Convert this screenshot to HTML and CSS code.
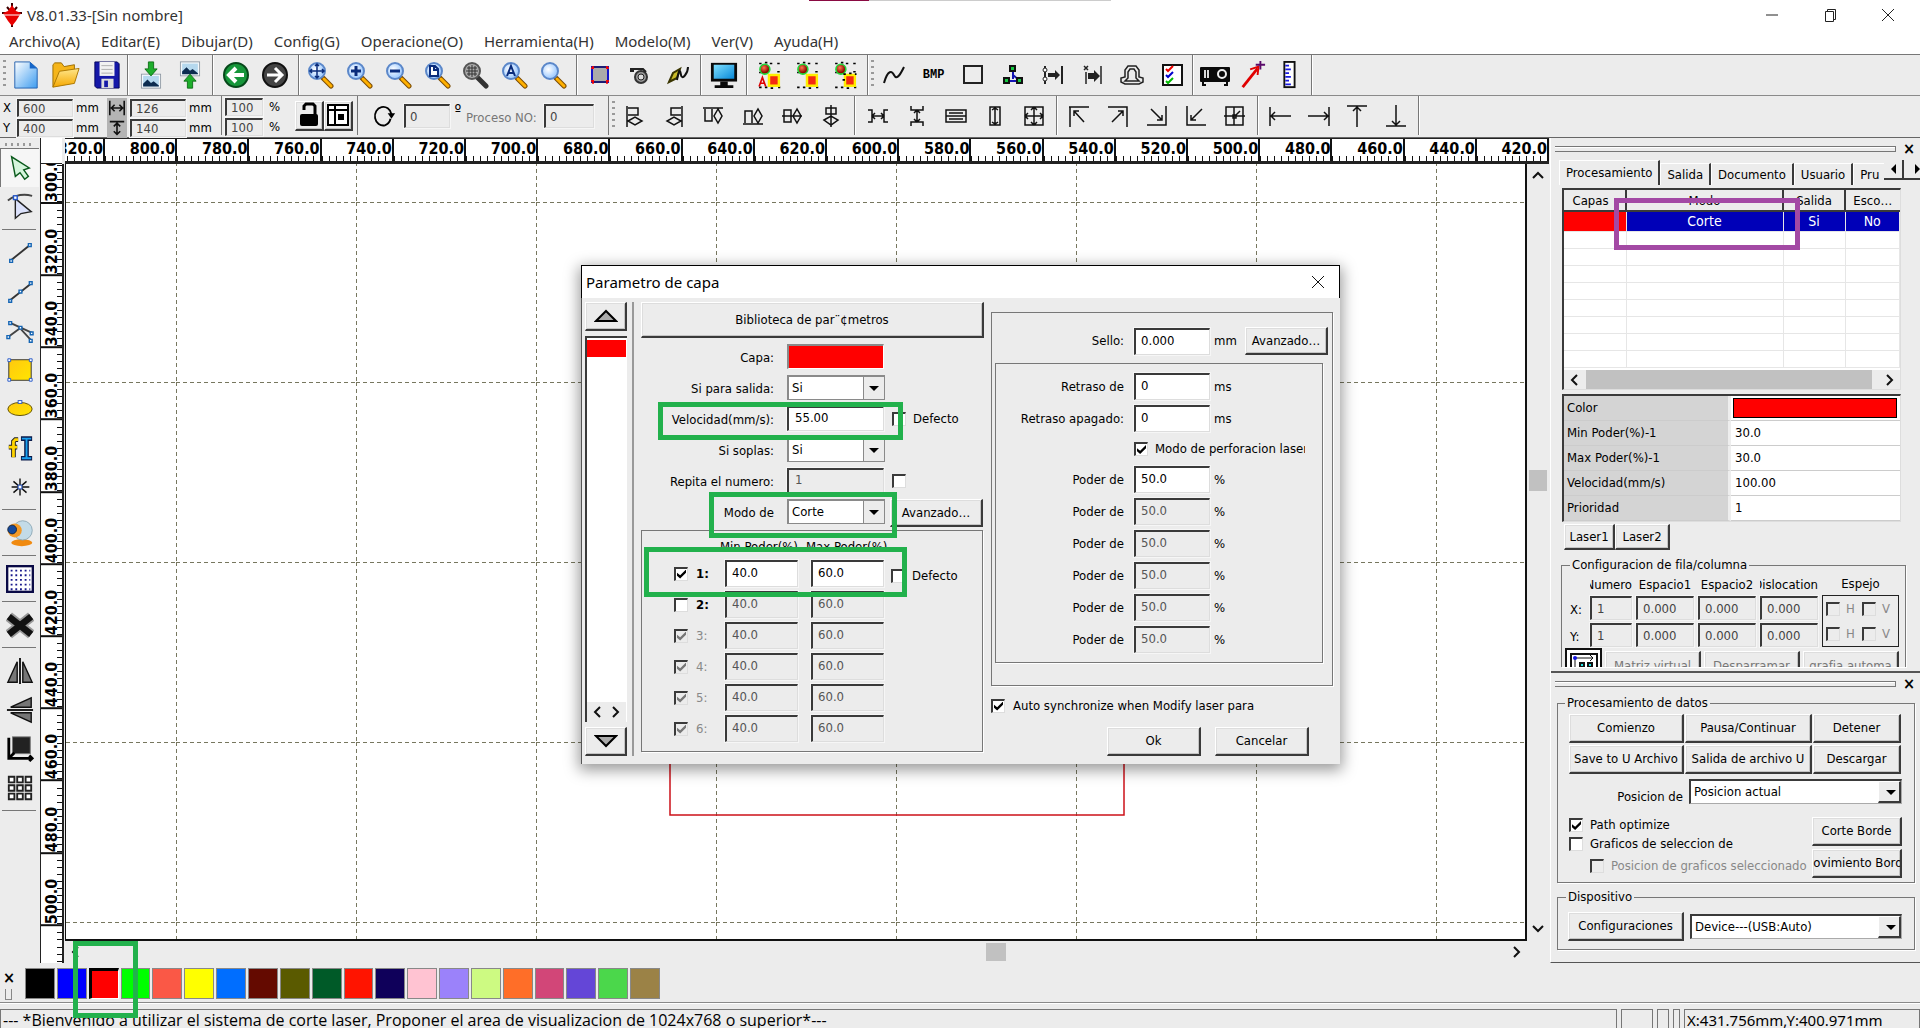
FILE: index.html
```html
<!DOCTYPE html>
<html lang="es">
<head>
<meta charset="utf-8">
<title>V8.01.33-[Sin nombre]</title>
<link rel="stylesheet" href="styles.css">
</head>
<body>
<svg class="defs" width="0" height="0" aria-hidden="true">
  <defs>
    <linearGradient id="gold" x1="0" y1="0" x2="1" y2="1"><stop offset="0" stop-color="#ffc810"/><stop offset="1" stop-color="#ffe500"/></linearGradient>
    <linearGradient id="sheet" x1="0" y1="0" x2="1" y2="1"><stop offset="0" stop-color="#fff"/><stop offset="1" stop-color="#3d9cf0"/></linearGradient>
    <linearGradient id="folder" x1="0" y1="0" x2="0" y2="1"><stop offset="0" stop-color="#ffe68a"/><stop offset="1" stop-color="#f5a800"/></linearGradient>
    <linearGradient id="screen" x1="0" y1="0" x2="1" y2="1"><stop offset="0" stop-color="#7fe0ff"/><stop offset="1" stop-color="#0788d8"/></linearGradient>
    <radialGradient id="ball" cx=".4" cy=".35"><stop offset="0" stop-color="#ff7a50"/><stop offset="1" stop-color="#8e0a00"/></radialGradient>
    <radialGradient id="lens" cx=".4" cy=".4"><stop offset="0" stop-color="#fff"/><stop offset="1" stop-color="#a9d0ff"/></radialGradient>
    <symbol id="glass" viewBox="0 0 28 28"><path d="M16 17L24 25" stroke="#7a4a00" stroke-width="5" stroke-linecap="round"/><path d="M17 18L24 25" stroke="#ffb000" stroke-width="3" stroke-linecap="round"/><circle cx="10" cy="10" r="8" fill="url(#lens)" stroke="#5b87c9" stroke-width="2"/></symbol>
    <symbol id="picture" viewBox="0 0 24 18"><rect x="1" y="1" width="22" height="16" fill="#f4f8fb" stroke="#8b95a0" stroke-width="1"/><rect x="3" y="3" width="18" height="12" fill="#b5d8ee"/><path d="M3 15V12L8 7L12 11L15 9L21 14V15Z" fill="#0d2c50"/></symbol>
    <symbol id="shapes" viewBox="0 0 28 34"><path d="M2 3h3M9 2h3M15 3h3M24 3h3M2 14h3M24 13h3M2 32h3M9 32h3M16 33h3M25 32h3" stroke="#000" stroke-width="2"/><circle cx="9" cy="10" r="6" fill="url(#ball)" stroke="#22d83a" stroke-width="2"/><rect x="14" y="17" width="12" height="13" fill="#f42a12" stroke="#ffee00" stroke-width="3"/></symbol>
    <pattern id="grid" width="180" height="180" patternUnits="userSpaceOnUse" patternTransform="translate(110 38)">
      <path d="M0 .5H180" stroke="#77775f" stroke-dasharray="4 3"/>
      <path d="M.5 0V180" stroke="#77775f" stroke-dasharray="4 3"/>
    </pattern>
  </defs>
</svg>

<header class="titlebar">
  <svg class="logo" viewBox="0 0 20 24"><path d="M10 0V24M5 4L10 10L15 4M0 10H20" stroke="#3c0000" stroke-width="2" fill="none"/><path d="M10 2L14 8L19 10L14 18L10 23L6 18L1 10L6 8Z" fill="#e80000"/><path d="M2 12H18" stroke="#fff" stroke-width="1"/></svg>
  <h1 class="title">V8.01.33-[Sin nombre]</h1>
  <span class="progress"></span>
  <div class="window-buttons">
    <button aria-label="Minimizar"><svg viewBox="0 0 14 14"><path d="M1 7H13" stroke="#222"/></svg></button>
    <button aria-label="Restaurar"><svg viewBox="0 0 14 14"><path d="M2.500 3.500H10.500V13.500H2.500ZM4.500 3V1.500H12.500V11.500H11" fill="none" stroke="#222"/></svg></button>
    <button aria-label="Cerrar"><svg viewBox="0 0 14 14"><path d="M1 1L13 13M13 1L1 13" stroke="#222"/></svg></button>
  </div>
</header>

<nav class="menu">
  <a href="#">Archivo(A)</a><a href="#">Editar(E)</a><a href="#">Dibujar(D)</a><a href="#">Config(G)</a><a href="#">Operacione(O)</a><a href="#">Herramienta(H)</a><a href="#">Modelo(M)</a><a href="#">Ver(V)</a><a href="#">Ayuda(H)</a>
</nav>

<div class="toolbar toolbar-main">
  <div class="group g-file"><i class="grip"></i>
    <button aria-label="Nuevo"><svg viewBox="0 0 28 30"><path d="M2 1H18L26 8V29H2Z" fill="url(#sheet)" stroke="#1f5fae"/><path d="M18 1V8H26Z" fill="#1666c8"/></svg></button>
    <button aria-label="Abrir"><svg class="wide" viewBox="0 0 32 30"><path d="M2 28V4L4 2H11L14 6L25 4V12" fill="#f5b51a" stroke="#9a6a00"/><path d="M2 28L9 11L30 8L25 24Z" fill="url(#folder)" stroke="#a87400"/></svg></button>
    <button aria-label="Guardar"><svg viewBox="0 0 28 30"><path d="M1 1H25L27 3V29H3L1 27Z" fill="#1518a8" stroke="#00005a"/><rect x="6" y="1" width="16" height="15" fill="#f2f2f2"/><path d="M8 5H20M8 9H20M8 13H20" stroke="#aaa"/><rect x="8" y="19" width="13" height="10" fill="#ddd"/><rect x="11" y="21" width="4" height="7" fill="#1518a8"/></svg></button>
  </div>
  <div class="group g-io">
    <button aria-label="Importar"><svg viewBox="0 0 26 32"><use href="#picture" x="1" y="14" width="24" height="18"/><path d="M10 1H16V9H20L13 17L6 9H10Z" fill="#1eae2c" stroke="#0a6a14"/></svg></button>
    <button aria-label="Exportar"><svg viewBox="0 0 26 32"><use href="#picture" x="1" y="0" width="24" height="18"/><path d="M10 31H16V23H20L13 15L6 23H10Z" fill="#1eae2c" stroke="#0a6a14"/></svg></button>
  </div>
  <div class="group g-undo">
    <button aria-label="Deshacer"><svg viewBox="0 0 28 28"><circle cx="14" cy="14" r="12" fill="#16963a" stroke="#06481a" stroke-width="2"/><path d="M22 14H8M14 7L7 14L14 21" fill="none" stroke="#fff" stroke-width="4"/></svg></button>
    <button aria-label="Rehacer"><svg viewBox="0 0 28 28"><circle cx="14" cy="14" r="12" fill="#444" stroke="#111" stroke-width="2"/><path d="M6 14H20M14 7L21 14L14 21" fill="none" stroke="#fff" stroke-width="3"/></svg></button>
  </div>
  <div class="group g-zoom">
    <button aria-label="Mover vista"><svg viewBox="0 0 28 28"><use href="#glass"/><path d="M10 3V17M3 10H17M8 5L10 3L12 5M8 15L10 17L12 15M5 8L3 10L5 12M15 8L17 10L15 12" stroke="#0a2c7c" stroke-width="1.500" fill="none"/></svg></button>
    <button aria-label="Acercar"><svg viewBox="0 0 28 28"><use href="#glass"/><path d="M10 5V15M5 10H15" stroke="#0a2c7c" stroke-width="3"/></svg></button>
    <button aria-label="Alejar"><svg viewBox="0 0 28 28"><use href="#glass"/><path d="M5 10H15" stroke="#0a2c7c" stroke-width="3"/></svg></button>
    <button aria-label="Ver página"><svg viewBox="0 0 28 28"><use href="#glass"/><path d="M6 5H11L14 8V15H6ZM10 5V9H14" fill="#fff" stroke="#0a2c7c" stroke-width="2"/></svg></button>
    <button aria-label="Ver área"><svg viewBox="0 0 28 28"><path d="M16 17L24 25" stroke="#333" stroke-width="5" stroke-linecap="round"/><circle cx="10" cy="10" r="8" fill="#aaa" stroke="#555" stroke-width="2"/><path d="M5 7H15M4 10H16M5 13H15M7 5V15M10 4V16M13 5V15" stroke="#333"/></svg></button>
    <button aria-label="Ver todo"><svg viewBox="0 0 28 28"><use href="#glass"/><path d="M6 15L10 5L14 15M7 12H13" stroke="#0a2c7c" stroke-width="2" fill="none"/></svg></button>
    <button aria-label="Lupa"><svg viewBox="0 0 28 28"><use href="#glass"/></svg></button>
  </div>
  <div class="group g-frame">
    <button aria-label="Marco"><svg viewBox="0 0 28 28"><rect x="6" y="6" width="16" height="15" fill="#aaa" stroke="#1414c8" stroke-width="2"/><path d="M6 6H22M6 21H22" stroke="#222"/><path d="M5 7h3M7 5v3M20 7h3M21 5v3M5 20h3M7 19v4M20 20h3M21 19v4" stroke="#f00" stroke-width="1.500"/></svg></button>
    <button aria-label="Cortador"><svg viewBox="0 0 28 28"><circle cx="16" cy="16" r="6" fill="#999" stroke="#333" stroke-width="2"/><circle cx="16" cy="16" r="3" fill="#ddd" stroke="#222"/><path d="M9 8H18L21 11" fill="none" stroke="#222" stroke-width="2"/><rect x="5" y="7" width="4" height="4" fill="#222"/></svg></button>
    <button aria-label="Trayectoria"><svg viewBox="0 0 28 28"><path d="M5 21L9 12L16 8L13 17Z" fill="#c9bb28" stroke="#3a3500" stroke-width="2"/><path d="M13 19C15 8 16 8 17 14C18 20 24 12 24 6" fill="none" stroke="#111" stroke-width="2"/></svg></button>
  </div>
  <div class="group g-preview">
    <button aria-label="Vista previa"><svg viewBox="0 0 30 30"><rect x="1" y="2" width="28" height="20" fill="#0a0a0a"/><rect x="4" y="4" width="22" height="15" fill="url(#screen)"/><path d="M11 22H19V26H25V29H5V26H11Z" fill="#0a0a0a"/></svg></button>
  </div>
  <div class="group g-select">
    <button aria-label="Ordenar automático"><svg viewBox="0 0 28 34"><use href="#shapes"/><path d="M2 31L6 20L10 31M3 27H9" fill="none" stroke="#e00000" stroke-width="2"/></svg></button>
    <button aria-label="Ordenar manual"><svg viewBox="0 0 28 34"><use href="#shapes"/></svg></button>
    <button aria-label="Ordenar selección"><svg viewBox="0 0 28 34"><use href="#shapes"/><path d="M12 16h3M19 15h3M26 16h2M11 23h3" stroke="#000" stroke-width="2"/></svg></button>
  </div>
  <div class="group g-edit"><i class="grip"></i>
    <button aria-label="Suavizar"><svg viewBox="0 0 28 28"><path d="M4 22C8 8 12 10 14 14C17 20 21 12 24 6" fill="none" stroke="#111" stroke-width="2"/></svg></button>
    <button aria-label="Mapa de bits" class="bmp">BMP</button>
    <button aria-label="Cerrar curva"><svg viewBox="0 0 28 28"><rect x="5" y="5" width="18" height="17" fill="none" stroke="#222" stroke-width="2"/></svg></button>
    <button aria-label="Nodos"><svg viewBox="0 0 28 28"><path d="M14 8V18M6 20H22M14 14L21 20" stroke="#1414b4" stroke-width="2"/><path d="M11 5h5v5h-5zM5 17h5v5H5zM18 17h5v5h-5z" fill="#14c840" stroke="#111" stroke-width="2"/></svg></button>
    <button aria-label="Unir"><svg viewBox="0 0 28 28"><path d="M6 5V23M23 5V23" stroke="#222" stroke-width="2"/><circle cx="6" cy="9" r="2" fill="#fff" stroke="#222"/><circle cx="6" cy="18" r="2" fill="#fff" stroke="#222"/><path d="M9 12H16V9L21 14L16 19V16H9Z" fill="#222"/></svg></button>
    <button aria-label="Desplazar"><svg viewBox="0 0 28 28"><path d="M7 11V23M22 5V23M5 5L9 9M9 5L5 9" stroke="#222" stroke-width="1.500"/><path d="M9 12H15V9L21 15L15 21V18H9Z" fill="#222"/></svg></button>
    <button aria-label="Contorno"><svg viewBox="0 0 28 28"><path d="M7 16V9L10 5H18L21 9V16L25 17V21L21 23H7L3 21V17ZM10 17V11L12 8H16L18 11V17L21 20H7Z" fill="none" stroke="#222" stroke-width="1.500"/></svg></button>
    <button aria-label="Comprobar"><svg viewBox="0 0 28 28"><rect x="5" y="4" width="19" height="20" fill="#fff" stroke="#111" stroke-width="2"/><path d="M8 8L10 10L15 5" stroke="#e00" stroke-width="2" fill="none"/><path d="M8 14L10 16L15 11" stroke="#00c" stroke-width="2" fill="none"/><path d="M8 20L10 22L15 17" stroke="#0b0" stroke-width="2" fill="none"/></svg></button>
  </div>
  <div class="group g-device">
    <button aria-label="Láser"><svg class="wide" viewBox="0 0 32 28"><rect x="1" y="6" width="30" height="15" rx="1" fill="#0a0a0a"/><path d="M4 20V24H7M28 20V24H25" fill="none" stroke="#0a0a0a" stroke-width="2"/><path d="M6 9V17M9 9V17" stroke="#ddd" stroke-width="2"/><circle cx="23" cy="13" r="4" fill="none" stroke="#eee" stroke-width="2"/></svg></button>
    <button aria-label="Origen"><svg viewBox="0 0 28 30"><path d="M4 28L20 8" stroke="#e00000" stroke-width="3"/><path d="M12 9L21 6L20 15" fill="none" stroke="#e00000" stroke-width="2"/><path d="M23 0V9M18 4H28" stroke="#5a0a6a" stroke-width="2"/></svg></button>
    <button aria-label="Regla"><svg viewBox="0 0 28 30"><rect x="9" y="1" width="11" height="27" fill="#fff" stroke="#111" stroke-width="2"/><path d="M10 5H14M10 9H16M10 13H14M10 17H16M10 21H14M10 25H16" stroke="#1a1ae0" stroke-width="2"/></svg></button>
  </div>
</div>

<div class="toolbar toolbar-props">
  <div class="coords">
    <label for="px">X</label><input id="px" value="600"><span>mm</span>
    <svg viewBox="0 0 20 18"><path d="M1 0V18M19 0V18M3 9H17M7 5L3 9L7 13M13 5L17 9L13 13" stroke="#111" stroke-width="2" fill="none"/></svg>
    <input aria-label="Ancho" value="126"><span>mm</span>
    <label for="py">Y</label><input id="py" value="400"><span>mm</span>
    <svg viewBox="0 0 20 18"><path d="M1 1H19M10 3V17M6 7L10 3L14 7M6 13L10 17L14 13" stroke="#111" stroke-width="2" fill="none"/></svg>
    <input aria-label="Alto" value="140"><span>mm</span>
  </div>
  <div class="scale">
    <div class="percent">
      <input aria-label="Escala X" value="100"><span>%</span>
      <input aria-label="Escala Y" value="100"><span>%</span>
    </div>
    <button class="raised" aria-label="Bloquear proporción"><svg viewBox="0 0 26 26"><path d="M8 8V4L10 2H17L19 4V13" fill="none" stroke="#000" stroke-width="3"/><rect x="4" y="12" width="18" height="12" rx="2" fill="#000"/></svg></button>
    <button class="raised" aria-label="Punto de referencia"><svg viewBox="0 0 26 26"><path d="M3 3H23V23H3ZM3 8H23M10 3V23" fill="#fff" stroke="#000" stroke-width="2"/><rect x="13" y="12" width="6" height="6"/></svg></button>
  </div>
  <div class="rotate">
    <svg viewBox="0 0 26 28"><path d="M14 24A9 10 0 1 1 21 12" fill="none" stroke="#000" stroke-width="2"/><path d="M17 11H25L21 17Z" /><path d="M20 17C19 21 17 23 14 24" fill="none" stroke="#000" stroke-width="2"/></svg>
    <input aria-label="Ángulo" value="0"><span class="degree">º</span>
    <label for="proc">Proceso NO:</label><input id="proc" class="proc" value="0">
  </div>
  <div class="group g-align"><i class="grip"></i>
    <button aria-label="Izquierda"><svg viewBox="0 0 24 24"><path d="M4 2V23M5 4H15V11H5M5 17L12 13L19 17L12 21Z"/></svg></button>
    <button aria-label="Derecha"><svg viewBox="0 0 24 24"><path d="M20 2V23M19 4H9V11H19M19 17L12 13L5 17L12 21Z"/></svg></button>
    <button aria-label="Arriba"><svg viewBox="0 0 24 24"><path d="M2 4H22M4 5V17H11V5M17 5L13 12L17 19L21 12Z"/></svg></button>
    <button aria-label="Abajo"><svg viewBox="0 0 24 24"><path d="M2 20H22M4 19V7H11V19M17 19L13 12L17 5L21 12Z"/></svg></button>
    <button aria-label="Centro horizontal"><svg viewBox="0 0 24 24"><path d="M2 12H22M4 6H11V18H4ZM17 5L13 12L17 19L21 12Z"/></svg></button>
    <button aria-label="Centro vertical"><svg viewBox="0 0 24 24"><path d="M12 1V23M7 4H17V10H7ZM5 16L12 12L19 16L12 21Z"/></svg></button>
  </div>
  <div class="group g-space">
    <button aria-label="Espacio horizontal"><svg viewBox="0 0 24 24"><path d="M2 6H6V18H2M22 6H18V18H22M6 12H18M9 9L6 12L9 15M15 9L18 12L15 15"/></svg></button>
    <button aria-label="Espacio vertical"><svg viewBox="0 0 24 24"><path d="M6 2V6H18V2M6 22V18H18V22M12 6V18M9 9L12 6L15 9M9 15L12 18L15 15"/></svg></button>
    <button aria-label="Mismo ancho"><svg viewBox="0 0 24 24"><path d="M2 6H22V18H2ZM2 12H22M5 9H19M5 15H19"/></svg></button>
    <button aria-label="Mismo alto"><svg viewBox="0 0 24 24"><path d="M7 3H17V21H7ZM12 3V21M9 6L12 4L15 6M9 18L12 20L15 18"/></svg></button>
    <button aria-label="Mismo tamaño"><svg viewBox="0 0 24 24"><path d="M3 3H21V21H3ZM12 3V21M3 12H21M9 6L12 3L15 6M9 18L12 21L15 18M6 9L3 12L6 15M18 9L21 12L18 15"/></svg></button>
  </div>
  <div class="group g-corner">
    <button aria-label="Esquina superior izquierda"><svg viewBox="0 0 24 24"><path d="M3 23V3H22M7 7L17 18M7 12V7H12M2 3h2"/></svg></button>
    <button aria-label="Esquina superior derecha"><svg viewBox="0 0 24 24"><path d="M21 23V3H2M17 7L6 18M12 7H17V12"/></svg></button>
    <button aria-label="Esquina inferior derecha"><svg viewBox="0 0 24 24"><path d="M21 2V21H2M6 5L17 16M17 11V16H12"/></svg></button>
    <button aria-label="Esquina inferior izquierda"><svg viewBox="0 0 24 24"><path d="M3 2V21H22M18 5L7 16M7 11V16H12"/></svg></button>
    <button aria-label="Centro"><svg viewBox="0 0 24 24"><path d="M3 3H20V21H3ZM11 3V21M1 12H22M12 12L17 7M10 11h3v3h-3z"/></svg></button>
  </div>
  <div class="group g-edge">
    <button aria-label="Borde izquierdo"><svg viewBox="0 0 24 24"><path d="M2 3V22M3 12H23M7 8L3 12L7 16"/></svg></button>
    <button aria-label="Borde derecho"><svg viewBox="0 0 24 24"><path d="M22 3V22M1 12H21M17 8L21 12L17 16"/></svg></button>
    <button aria-label="Borde superior"><svg viewBox="0 0 24 24"><path d="M2 2H22M12 3V23M8 7L12 3L16 7"/></svg></button>
    <button aria-label="Borde inferior"><svg viewBox="0 0 24 24"><path d="M2 22H22M12 1V21M8 17L12 21L16 17"/></svg></button>
  </div>
</div>

<main class="workspace">
  <aside class="tools">
    <i class="grip-h"></i>
    <button class="active" aria-label="Seleccionar"><svg viewBox="0 0 30 30"><path d="M6 3L10 24L15 20L20 27L24 24L19 17L25 15Z" fill="#d5f5dc" stroke="#0a5a1c" stroke-width="1.500"/></svg></button>
    <button aria-label="Editar nodos"><svg viewBox="0 0 30 30"><path d="M2 8C10 2 20 1 28 3" fill="none" stroke="#444" stroke-width="2"/><path d="M10 6V27L16 22L27 20Z" fill="#dce2fb" stroke="#222" stroke-width="1.500"/><rect x="8" y="3" width="4" height="4" fill="#fff" stroke="#2456c8" stroke-width="1.500"/></svg></button>
    <hr>
    <button aria-label="Línea"><svg viewBox="0 0 30 30"><path d="M5 23L25 7" stroke="#333" stroke-width="2"/><path d="M4 22h3v3H4zM24 5h3v3h-3z" fill="#fff" stroke="#1565b4" stroke-width="1.500"/></svg></button>
    <button aria-label="Polilínea"><svg viewBox="0 0 30 30"><path d="M4 24L27 6" stroke="#333" stroke-width="2"/><path d="M3 23h3v3H3zM14 13h3v3h-3zM25 4h3v3h-3z" fill="#fff" stroke="#1565b4" stroke-width="1.500"/></svg></button>
    <button aria-label="Curva"><svg viewBox="0 0 30 30"><path d="M4 6L28 17M3 21L15 12L27 25" fill="none" stroke="#444" stroke-width="2"/><path d="M3 5h3v3H3zM1 20h3v3H1zM14 10h3v3h-3zM26 16h3v3h-3zM25 24h3v3h-3z" fill="#fff" stroke="#1565b4" stroke-width="1.500"/></svg></button>
    <button aria-label="Rectángulo"><svg viewBox="0 0 30 30"><rect x="3" y="4" width="24" height="22" fill="url(#gold)" stroke="#333"/><path d="M2 3h3v3H2zM25 3h3v3h-3zM2 24h3v3H2zM25 24h3v3h-3z" fill="#fff" stroke="#2456c8"/></svg></button>
    <button aria-label="Elipse"><svg viewBox="0 0 30 30"><ellipse cx="15" cy="15" rx="13" ry="7" fill="url(#gold)" stroke="#5a4a00"/><rect x="13" y="6" width="4" height="3" fill="#fff" stroke="#2456c8"/></svg></button>
    <button aria-label="Texto"><svg viewBox="0 0 30 30"><path d="M13 6H10L8 8V25M3 14H12" fill="none" stroke="#222" stroke-width="5"/><path d="M13 6H10L8 8V25M3 14H12" fill="none" stroke="#ffd400" stroke-width="3"/><path d="M16 5H28M22 5V26M16 26H28" stroke="#0a1a4a" stroke-width="5"/><path d="M17 5H27M22 5V26M17 26H27" stroke="#18a0f0" stroke-width="2"/></svg></button>
    <button aria-label="Punto"><svg viewBox="0 0 30 30"><path d="M15 6V24M6 15H25M8 9L22 21M22 9L8 21" stroke="#111" stroke-width="1.500"/><rect x="13" y="13" width="4" height="4" fill="#fff" stroke="#2456c8"/></svg></button>
    <hr>
    <button aria-label="Cámara"><svg viewBox="0 0 32 32"><ellipse cx="18" cy="27" rx="12" ry="4" fill="#f08a10"/><circle cx="19" cy="13" r="11" fill="#c3dbe8" stroke="#8aa6b4"/><ellipse cx="10" cy="13" rx="8" ry="8" fill="#f39a28"/><circle cx="7" cy="12" r="5" fill="#164a9c" stroke="#0a2040"/></svg></button>
    <hr>
    <button aria-label="Cuadrícula"><svg viewBox="0 0 30 30"><rect x="1" y="1" width="28" height="28" fill="#fff" stroke="#0a0a46" stroke-width="3"/><path d="M5 6H26M5 11H26M5 16H26M5 21H26M5 26H26" stroke="#1a1a8c" stroke-width="2" stroke-dasharray="2 3"/></svg></button>
    <hr>
    <button aria-label="Eliminar"><svg viewBox="0 0 30 30"><path d="M3 6L27 25M27 6L3 25" stroke="#999" stroke-width="11"/><path d="M3 6L27 25M27 6L3 25" stroke="#111" stroke-width="7"/></svg></button>
    <hr>
    <button aria-label="Reflejar horizontal"><svg viewBox="0 0 30 30"><path d="M15 1V29" stroke="#111" stroke-width="2"/><path d="M12 5V27H2ZM18 5V27H28Z" fill="#777" stroke="#111" stroke-width="1.500"/></svg></button>
    <button aria-label="Reflejar vertical"><svg viewBox="0 0 30 30"><path d="M1 15H29" stroke="#111" stroke-width="2"/><path d="M5 12H27V2ZM5 18H27V28Z" fill="#777" stroke="#111" stroke-width="1.500"/></svg></button>
    <button aria-label="Origen de pieza"><svg viewBox="0 0 30 30"><rect x="7" y="2" width="19" height="18" fill="#222" stroke="#777"/><path d="M3 3V25H28M25 22L28 25L25 28M3 25L9 19" fill="none" stroke="#000" stroke-width="3"/></svg></button>
    <button aria-label="Matriz"><svg viewBox="0 0 30 30"><path d="M3 3h6v6H3zM12 3h6v6h-6zM21 3h6v6h-6zM3 12h6v6H3zM12 12h6v6h-6zM21 12h6v6h-6zM3 21h6v6H3zM12 21h6v6h-6zM21 21h6v6h-6z" fill="#fff" stroke="#222" stroke-width="2"/></svg></button>
    <hr>
  </aside>

  <section class="drawing">
    <div class="corner"></div>
    <div class="ruler-x"><span class="lead">820.0</span><span>800.0</span><span>780.0</span><span>760.0</span><span>740.0</span><span>720.0</span><span>700.0</span><span>680.0</span><span>660.0</span><span>640.0</span><span>620.0</span><span>600.0</span><span>580.0</span><span>560.0</span><span>540.0</span><span>520.0</span><span>500.0</span><span>480.0</span><span>460.0</span><span>440.0</span><span>420.0</span></div>
    <div class="ruler-y"><span class="lead">300.0</span><span>320.0</span><span>340.0</span><span>360.0</span><span>380.0</span><span>400.0</span><span>420.0</span><span>440.0</span><span>460.0</span><span>480.0</span><span>500.0</span><span class="tail"></span></div>
    <svg class="canvas"><rect width="100%" height="100%" fill="#fff"/><rect width="100%" height="100%" fill="url(#grid)"/><rect x="604" y="300" width="454" height="351" fill="none" stroke="#cc1018" stroke-width="1.500"/></svg>
    <div class="scroll-v"><svg viewBox="0 0 12 8"><path d="M1 7L6 2L11 7"/></svg><i></i><svg viewBox="0 0 12 8"><path d="M1 1L6 6L11 1"/></svg></div>
    <div class="scroll-h"><svg viewBox="0 0 8 12"><path d="M7 1L2 6L7 11"/></svg><i></i><svg viewBox="0 0 8 12"><path d="M1 1L6 6L1 11"/></svg></div>
  </section>

  <aside class="panels">
    <section class="panel panel-layers">
      <div class="dock"><i></i><button aria-label="Cerrar panel">×</button></div>
      <div class="tabs">
        <button class="current">Procesamiento</button><button>Salida</button><button>Documento</button><button>Usuario</button><button class="cut">Pru</button>
        <span class="tab-arrows"><button aria-label="Anterior"><i class="left"></i></button><button aria-label="Siguiente"><i class="right"></i></button></span>
      </div>
      <div class="layers">
        <table>
          <colgroup><col class="c1"><col class="c2"><col class="c3"><col></colgroup>
          <thead><tr><th>Capas</th><th>Modo</th><th>Salida</th><th>Esco…</th></tr></thead>
          <tbody>
            <tr class="selected"><td class="red"></td><td>Corte</td><td>Si</td><td>No</td></tr>
            <tr><td></td><td></td><td></td><td></td></tr><tr><td></td><td></td><td></td><td></td></tr>
            <tr><td></td><td></td><td></td><td></td></tr><tr><td></td><td></td><td></td><td></td></tr>
            <tr><td></td><td></td><td></td><td></td></tr><tr><td></td><td></td><td></td><td></td></tr>
            <tr><td></td><td></td><td></td><td></td></tr><tr><td></td><td></td><td></td><td></td></tr>
          </tbody>
        </table>
        <div class="scroll-list"><svg viewBox="0 0 8 12"><path d="M7 1L2 6L7 11"/></svg><i></i><svg viewBox="0 0 8 12"><path d="M1 1L6 6L1 11"/></svg></div>
        <span class="mark mark-mode"></span>
      </div>
      <table class="props">
        <tr><th>Color</th><td><i class="swatch"></i></td></tr>
        <tr><th>Min Poder(%)-1</th><td>30.0</td></tr>
        <tr><th>Max Poder(%)-1</th><td>30.0</td></tr>
        <tr><th>Velocidad(mm/s)</th><td>100.00</td></tr>
        <tr><th>Prioridad</th><td>1</td></tr>
      </table>
      <div class="lasers"><button class="raised">Laser1</button><button class="raised">Laser2</button></div>
      <fieldset class="rows">
        <legend>Configuracion de fila/columna</legend>
        <div class="matrix">
          <div class="matrix-grid">
            <span></span><span class="clip-left"><b>Numero</b></span><span>Espacio1</span><span>Espacio2</span><span class="clip-left"><b>Dislocation</b></span>
            <label for="mx">X:</label><input id="mx" value="1" disabled><input aria-label="Espacio1 X" value="0.000" disabled><input aria-label="Espacio2 X" value="0.000" disabled><input aria-label="Dislocation X" value="0.000" disabled>
            <label for="my">Y:</label><input id="my" value="1" disabled><input aria-label="Espacio1 Y" value="0.000" disabled><input aria-label="Espacio2 Y" value="0.000" disabled><input aria-label="Dislocation Y" value="0.000" disabled>
          </div>
          <div class="mirror"><span>Espejo</span>
            <div class="mirror-box">
              <label><input type="checkbox" disabled>H</label><label><input type="checkbox" disabled>V</label>
              <label><input type="checkbox" disabled>H</label><label><input type="checkbox" disabled>V</label>
            </div>
          </div>
        </div>
        <div class="matrix-buttons">
          <button class="array" aria-label="Matriz"><svg viewBox="0 0 28 28"><path d="M1 28V1H27V28" fill="none" stroke="#111" stroke-width="2"/><path d="M5 5H23M5 5V25M20 2L23 5L20 8" stroke="#111" stroke-width="1" fill="none"/><circle cx="5" cy="5" r="2" fill="#1414e0"/><path d="M10 10h4v4h-4zM18 10h4v4h-4zM10 18h4v4h-4zM18 18h4v4h-4z" fill="#22e6e6" stroke="#111" stroke-width="2"/></svg></button>
          <button class="raised" disabled>Matriz virtual</button><button class="raised" disabled>Desparramar</button><button class="raised" disabled>grafia automa</button>
        </div>
      </fieldset>
    </section>

    <section class="panel panel-run">
      <div class="dock"><i></i><button aria-label="Cerrar panel">×</button></div>
      <fieldset class="run">
        <legend>Procesamiento de datos</legend>
        <div class="run-buttons">
          <button class="raised">Comienzo</button><button class="raised">Pausa/Continuar</button><button class="raised">Detener</button>
          <button class="raised">Save to U Archivo</button><button class="raised">Salida de archivo U</button><button class="raised">Descargar</button>
        </div>
        <div class="pos"><label for="pos">Posicion de</label><span class="select sunken"><select id="pos"><option>Posicion actual</option></select></span></div>
        <div class="options">
          <div class="checks">
            <label><input type="checkbox" checked>Path optimize</label>
            <label><input type="checkbox">Graficos de seleccion de</label>
            <label class="sub"><input type="checkbox" disabled>Posicion de graficos seleccionado</label>
          </div>
          <div class="borders"><button class="raised">Corte Borde</button><button class="raised"><span>Movimiento Borde</span></button></div>
        </div>
      </fieldset>
      <fieldset class="device">
        <legend>Dispositivo</legend>
        <div class="device-row"><button class="raised">Configuraciones</button><span class="select sunken"><select aria-label="Dispositivo"><option>Device---(USB:Auto)</option></select></span></div>
      </fieldset>
    </section>
  </aside>
</main>

<section class="palette">
  <div class="palette-dock"><button aria-label="Cerrar paleta">×</button><i></i></div>
  <div class="swatches">
    <button aria-label="Negro" style="background:#000"></button><button aria-label="Azul" style="background:#0000ff"></button><button class="picked" aria-label="Rojo" style="background:#ff0000"></button><button aria-label="Verde" style="background:#00ff00"></button><button aria-label="Coral" style="background:#fa5846"></button><button aria-label="Amarillo" style="background:#ffff00"></button><button aria-label="Azul claro" style="background:#006eff"></button><button aria-label="Granate" style="background:#640a00"></button><button aria-label="Oliva" style="background:#5a5a00"></button><button aria-label="Verde oscuro" style="background:#005a28"></button><button aria-label="Bermellón" style="background:#ff1400"></button><button aria-label="Marino" style="background:#0f005a"></button><button aria-label="Rosa" style="background:#ffc3d2"></button><button aria-label="Lila" style="background:#9b82fa"></button><button aria-label="Lima" style="background:#cdfa82"></button><button aria-label="Naranja" style="background:#ff6e28"></button><button aria-label="Frambuesa" style="background:#d24678"></button><button aria-label="Violeta" style="background:#6446d7"></button><button aria-label="Hierba" style="background:#4bd74b"></button><button aria-label="Ocre" style="background:#9b8246"></button>
  </div>
  <span class="mark mark-color"></span>
</section>

<footer class="status">
  <span class="message">--- *Bienvenido a utilizar el sistema de corte laser, Proponer el area de visualizacion de 1024x768 o superior*---</span>
  <span class="s1"></span><span class="s2"></span><span class="s3"></span><span class="position">X:431.756mm,Y:400.971mm</span>
</footer>

<div class="dialog" role="dialog" aria-labelledby="dlg">
  <header><h2 id="dlg">Parametro de capa</h2><button aria-label="Cerrar"><svg viewBox="0 0 14 14"><path d="M1 1L13 13M13 1L1 13" stroke="#111"/></svg></button></header>
  <div class="dialog-body">
    <div class="layer-list">
      <button class="raised" aria-label="Subir"><svg viewBox="0 0 24 14"><path d="M2 12L12 2L22 12Z" fill="#aaa" stroke="#000" stroke-width="2"/></svg></button>
      <div class="list"><i></i><div class="list-scroll"><svg viewBox="0 0 8 12"><path d="M7 1L2 6L7 11"/></svg><svg viewBox="0 0 8 12"><path d="M1 1L6 6L1 11"/></svg></div></div>
      <button class="raised" aria-label="Bajar"><svg viewBox="0 0 24 14"><path d="M2 2L12 12L22 2Z" fill="#aaa" stroke="#000" stroke-width="2"/></svg></button>
    </div>
    <div class="layer-form">
      <button class="raised library">Biblioteca de par¨¢metros</button>
      <div class="form-grid">
        <span class="lbl">Capa:</span><span class="color-box"></span><span></span>
        <label class="lbl" for="out">Si para salida:</label><span class="select"><select id="out"><option>Si</option></select></span><span></span>
        <label class="lbl" for="vel">Velocidad(mm/s):</label><input id="vel" value="55.00"><label class="after"><input type="checkbox">Defecto</label>
        <label class="lbl" for="blow">Si soplas:</label><span class="select"><select id="blow"><option>Si</option></select></span><span></span>
        <label class="lbl" for="rep">Repita el numero:</label><input id="rep" value="1" disabled><span class="after"><input type="checkbox" aria-label="Repetir"></span>
        <label class="lbl" for="mode">Modo de</label><span class="select"><select id="mode"><option>Corte</option></select></span><button class="raised">Avanzado…</button>
      </div>
      <div class="power">
        <span></span><span class="head">Min Poder(%)</span><span class="head">Max Poder(%)</span><span></span>
        <label><input type="checkbox" checked><b>1:</b></label><input aria-label="Min 1" value="40.0"><input aria-label="Max 1" value="60.0"><label class="after"><input type="checkbox">Defecto</label>
        <label><input type="checkbox"><b>2:</b></label><input aria-label="Min 2" value="40.0" disabled><input aria-label="Max 2" value="60.0" disabled><span></span>
        <label class="off"><input type="checkbox" checked disabled>3:</label><input aria-label="Min 3" value="40.0" disabled><input aria-label="Max 3" value="60.0" disabled><span></span>
        <label class="off"><input type="checkbox" checked disabled>4:</label><input aria-label="Min 4" value="40.0" disabled><input aria-label="Max 4" value="60.0" disabled><span></span>
        <label class="off"><input type="checkbox" checked disabled>5:</label><input aria-label="Min 5" value="40.0" disabled><input aria-label="Max 5" value="60.0" disabled><span></span>
        <label class="off"><input type="checkbox" checked disabled>6:</label><input aria-label="Min 6" value="40.0" disabled><input aria-label="Max 6" value="60.0" disabled><span></span>
      </div>
    </div>
    <div class="timing">
      <div class="seal">
        <div class="seal-row"><label class="lbl" for="seal">Sello:</label><input id="seal" value="0.000"><span>mm</span><button class="raised">Avanzado…</button></div>
        <div class="delays">
          <label class="lbl" for="d1">Retraso de</label><input id="d1" value="0"><span>ms</span>
          <label class="lbl" for="d2">Retraso apagado:</label><input id="d2" value="0"><span>ms</span>
          <label class="pierce"><input type="checkbox" checked><span>Modo de perforacion laser</span></label>
          <label class="lbl" for="p1">Poder de</label><input id="p1" value="50.0"><span>%</span>
          <label class="lbl" for="p2">Poder de</label><input id="p2" value="50.0" disabled><span>%</span>
          <label class="lbl" for="p3">Poder de</label><input id="p3" value="50.0" disabled><span>%</span>
          <label class="lbl" for="p4">Poder de</label><input id="p4" value="50.0" disabled><span>%</span>
          <label class="lbl" for="p5">Poder de</label><input id="p5" value="50.0" disabled><span>%</span>
          <label class="lbl" for="p6">Poder de</label><input id="p6" value="50.0" disabled><span>%</span>
        </div>
      </div>
      <label class="sync"><input type="checkbox" checked>Auto synchronize when Modify laser para</label>
      <div class="actions"><button class="raised">Ok</button><button class="raised">Cancelar</button></div>
    </div>
  </div>
  <span class="mark mark-speed"></span><span class="mark mark-cut"></span><span class="mark mark-power"></span>
</div>
</body>
</html>
```
FILE: styles.css
```css
* { box-sizing: border-box; }

:root {
  --face: #ececec;
  --dark: #3a3a3a;
  --mid: #8a8a8a;
  --ui: "DejaVu Sans Condensed", "Noto Sans", sans-serif;
  --shell: "Noto Sans", "Open Sans", sans-serif;
}

body {
  margin: 0;
  height: 100vh;
  display: flex;
  flex-direction: column;
  overflow: hidden;
  position: relative;
  background: var(--face);
  color: #000;
  font: 13px/16px var(--ui);
}

button, input, select { font: inherit; color: inherit; margin: 0; padding: 0; border-radius: 0; }
button { background: none; border: 0; white-space: nowrap; }
svg { display: block; flex: none; }
h1, h2 { margin: 0; font-weight: normal; }
.defs { position: absolute; }

/* Shared controls */
.raised {
  background: var(--face);
  border: solid;
  border-width: 1px 2px 2px 1px;
  border-color: #fff var(--dark) var(--dark) #fff;
  box-shadow: inset 1px 1px #ddd, inset -1px -1px #c4c4c4;
  overflow: hidden;
  display: flex;
  align-items: center;
  justify-content: center;
}
.raised:disabled { color: #777; }

input:not([type]) {
  background: #fff;
  border: solid;
  border-width: 2px 1px 1px 2px;
  border-color: var(--dark) #ddd #ddd var(--dark);
  outline: 1px solid #f6f6f6;
  min-width: 0;
}
input:disabled { background: var(--face); color: #555; }

input[type="checkbox"] {
  appearance: none;
  flex: none;
  width: 14px;
  height: 14px;
  background: #fff;
  border: solid;
  border-width: 2px 1px 1px 2px;
  border-color: var(--dark) #ddd #ddd var(--dark);
}
input[type="checkbox"]:disabled { background: var(--face); }
input[type="checkbox"]:checked::before {
  content: "";
  display: block;
  width: 9px;
  height: 9px;
  margin: 1px;
  background: #000;
  clip-path: polygon(0 35%, 35% 65%, 100% 0, 100% 35%, 35% 100%, 0 70%);
}
input[type="checkbox"]:disabled:checked::before { background: #777; }

.select { display: flex; position: relative; background: #fff; border: 2px solid var(--mid); border-width: 2px 1px 1px 2px; }
.select select { appearance: none; flex: 1; min-width: 0; border: 0; background: none; padding-left: 3px; }
.select::after {
  content: "";
  width: 20px;
  background: var(--face);
  border-left: 1px solid var(--mid);
}
.select::before {
  content: "";
  position: absolute;
  right: 5px;
  top: calc(50% - 2px);
  border: 5px solid transparent;
  border-top-color: #000;
  border-bottom: 0;
}
.select.sunken { border-color: var(--dark) #aaa #aaa var(--dark); }
.select.sunken::after { border: solid; border-width: 1px 2px 2px 1px; border-color: #fff var(--dark) var(--dark) #fff; }

.mark { position: absolute; border: 5px solid #22b14c; pointer-events: none; z-index: 2; }

fieldset { margin: 0; padding: 0; min-width: 0; border: 1px solid #777; box-shadow: 1px 1px #fff; }
legend { margin-left: 8px; padding: 0 2px; }

/* Title bar and menu */
.titlebar { height: 29px; display: flex; align-items: center; background: #fff; padding: 0 3px 0 2px; font: 15px/20px var(--shell); flex: none; }
.logo { width: 20px; height: 24px; margin-right: 5px; }
.title { font-size: 15px; color: #333; width: 782px; }
.progress { align-self: flex-start; width: 302px; height: 1px; background: linear-gradient(90deg, #8a0a42 60px, #ccc 60px); }
.window-buttons { margin-left: auto; display: flex; }
.window-buttons button { width: 58px; height: 28px; display: grid; place-items: center; }
.window-buttons svg { width: 14px; height: 14px; }

.menu { height: 26px; flex: none; display: flex; gap: 21px; padding: 1px 9px 0; background: #fff; border-bottom: 1px solid #777; font: 15px/22px var(--shell); }
.menu a { color: #333; text-decoration: none; }

/* Toolbars */
.toolbar { display: flex; flex: none; }
.toolbar-main { height: 41px; border-bottom: 1px solid var(--mid); }
.toolbar-props { height: 42px; border-bottom: 1px solid #666; padding-bottom: 2px; }
.group { display: flex; justify-content: space-around; align-items: center; padding: 0 3px; border-right: 1px solid #777; box-shadow: 1px 0 #fff; flex: none; }
.group button { display: grid; place-items: center; flex: 1; }
.toolbar-main svg { width: 28px; height: 28px; }
.toolbar-main svg.wide { width: 32px; }
.group .grip { width: 3px; height: 30px; flex: none; background: repeating-linear-gradient(#999 0 2px, transparent 2px 6px); }
.g-file { width: 128px; }
.g-file, .g-edit { padding-right: 0; }
.g-io { width: 85px; }
.g-undo { width: 86px; }
.g-zoom { width: 278px; }
.g-frame { width: 124px; }
.g-preview { width: 46px; }
.g-select { width: 121px; }
.g-edit { width: 325px; }
.g-device { width: 119px; }
.bmp { font: bold 12px/12px "Liberation Mono", monospace; }
.g-align { width: 246px; }
.g-space { width: 202px; }
.g-corner { width: 201px; }
.g-edge { width: 161px; }
.toolbar-props .group svg { width: 24px; height: 24px; fill: none; stroke: #111; stroke-width: 1.5; }

.toolbar-props input { background: var(--face); color: #444; padding-left: 4px; }
.coords { width: 222px; display: grid; grid-template-columns: 11px 56px 28px 20px 56px 28px; grid-template-rows: 18px 18px; gap: 2px 3px; padding: 3px 0 0 3px; align-items: center; border-right: 1px solid #777; flex: none; }
.coords input, .percent input { height: 18px; width: 100%; }
.coords svg { width: 20px; height: 20px; background: #b4b4b4; padding: 2px; }
.scale { width: 136px; display: flex; align-items: center; border-right: 1px solid #777; padding-left: 3px; flex: none; }
.percent { display: grid; grid-template-columns: 38px 16px; grid-template-rows: 18px 18px; gap: 2px 6px; margin-right: 10px; padding-top: 2px; align-items: center; }
.scale .raised { width: 29px; height: 30px; }
.scale svg { width: 26px; height: 26px; }
.rotate { width: 251px; display: flex; align-items: center; padding-left: 13px; border-right: 1px solid #777; flex: none; }
.rotate svg { width: 26px; height: 26px; margin-right: 7px; }
.rotate input { width: 46px; height: 24px; }
.degree { width: 16px; text-align: center; align-self: flex-start; padding-top: 6px; font-size: 16px; }
.rotate label { color: #777; width: 78px; padding-top: 4px; }
.rotate input.proc { width: 50px; }

/* Workspace */
.workspace { flex: 1; min-height: 0; display: flex; }

.tools { width: 40px; flex: none; display: flex; flex-direction: column; padding: 0 1px 0 0; }
.tools button { height: 39px; flex: none; display: grid; place-items: center; }
.tools .active { background: #f6f6f6; border-left: 1px solid #777; border-top: 1px solid #777; }
.tools svg { width: 28px; height: 28px; }
.tools hr { width: 34px; margin: 3px 2px; border: 0; height: 1px; background: #777; flex: none; }
.grip-h { width: 28px; height: 3px; margin: 5px 5px 2px; flex: none; background: repeating-linear-gradient(90deg, #999 0 2px, transparent 2px 6px); }

.drawing { flex: 1; min-width: 0; display: grid; grid-template: 26px minmax(0, 1fr) 22px / 24px minmax(0, 1fr) 22px; border-left: 1px solid #222; padding-right: 1px; }
.corner { background: #fff; border-bottom: 1px solid #222; margin-right: 3px; }
.ruler-x, .ruler-y { background: #fff; font: bold 16px/16px var(--ui); overflow: hidden; display: flex; }
.ruler-x { grid-column: 2 / 4; border-bottom: 3px solid #222; border-top: 1px solid #222; }
.ruler-x span {
  flex: 1 0 0;
  min-width: 0;
  border-right: 2px solid #111;
  text-align: right;
  padding-top: 2px;
  background: repeating-linear-gradient(90deg, #111 0 1px, transparent 1px 10%) bottom / 100% 5px no-repeat;
}
.ruler-x .lead { flex: none; width: 40px; direction: rtl; background-size: 72px 5px; background-position: right bottom; }
.ruler-y { grid-row: 2 / 4; flex-direction: column; margin-right: 1px; border-right: 2px solid #222; }
.ruler-y span {
  flex: 1 0 0;
  min-height: 0;
  writing-mode: vertical-rl;
  transform: rotate(180deg);
  border-top: 2px solid #111;
  text-align: left;
  width: 21px;
  padding-right: 3px;
  background: repeating-linear-gradient(#111 0 1px, transparent 1px 10%) left / 5px 100% no-repeat;
}
.ruler-y .lead { flex: none; height: 40px; background-size: 5px 72px; background-position: left top; }
.ruler-y .tail { flex: none; height: 37px; border: 0; background-size: 5px 72px; background-position: left bottom; }
.canvas { width: 100%; height: 100%; border-right: 2px solid #111; border-bottom: 2px solid #111; border-left: 1px solid #111; }
.scroll-v { display: flex; flex-direction: column; align-items: center; padding: 7px 0 8px; }
.scroll-v i { width: 18px; height: 21px; background: #c1c1c1; margin: 291px 0 auto; }
.scroll-h { display: flex; align-items: center; padding: 0 6px; }
.scroll-v svg { width: 12px; height: 8px; }
.scroll-h svg, .scroll-list svg, .list-scroll svg { width: 8px; height: 12px; }
.scroll-v path, .scroll-h path, .scroll-list path, .list-scroll path { fill: none; stroke: #111; stroke-width: 2; }
.scroll-h i { width: 20px; height: 18px; background: #c1c1c1; margin: 0 auto 0 907px; }

/* Right panels */
.panels { width: 370px; flex: none; display: flex; flex-direction: column; border-left: 1px solid #fff; border-bottom: 1px solid #555; }
.panel-layers { flex: 1; min-height: 0; overflow: hidden; padding-bottom: 4px; border-bottom: 2px solid #555; display: flex; flex-direction: column; }
.panel-layers > * { flex: none; }
.panel-layers > fieldset { flex: 1; min-height: 0; overflow: hidden; border-bottom: 0; }
.dock { display: flex; align-items: center; height: 22px; padding: 0 4px; gap: 6px; }
.dock i { flex: 1; height: 6px; border: solid #777; border-width: 1px 1px 1px 0; box-shadow: inset 0 1px #fff; }
.dock button, .palette-dock button { font-size: 16px; font-weight: bold; line-height: 16px; width: 14px; }

.tabs { display: flex; align-items: flex-end; height: 25px; padding: 0 0 0 8px; overflow: hidden; }
.tabs > button { height: 22px; border-top: 1px solid #fff; border-left: 1px solid #fff; border-right: 2px solid var(--dark); padding: 0 6px; }
.tabs > .current { height: 25px; }
.tabs > .cut { flex: 1; border-right: 0; text-align: left; overflow: hidden; }
.tab-arrows { display: flex; align-self: flex-start; flex: none; }
.tab-arrows button { width: 20px; height: 20px; border-right: 2px solid var(--dark); border-bottom: 2px solid var(--dark); display: grid; place-items: center; }
.tab-arrows button:last-child { width: 16px; border-right: 0; justify-items: end; }
.tab-arrows i { border: 5px solid transparent; border-right-color: #000; border-left: 0; }
.tab-arrows .right { border-left: 5px solid #000; border-right: 0; }

.layers { position: relative; margin: 3px 19px 0 11px; height: 202px; border: 2px solid var(--dark); border-right: 1px solid #ddd; border-bottom: 1px solid #ddd; background: #fff; display: flex; flex-direction: column; }
.layers table { width: 100%; border-collapse: collapse; table-layout: fixed; }
.c1 { width: 62px; }
.c2 { width: 157px; }
.c3 { width: 62px; }
.layers th { font-weight: normal; height: 21px; padding: 2px 0 0; background: var(--face); border-right: 2px solid var(--dark); border-bottom: 2px solid var(--dark); }
.layers th:first-child { padding-right: 8px; }
.layers th:last-child { border-right: 0; }
.layers td { height: 17px; padding: 0; border: solid #e6e6e6; border-width: 0 1px 1px 0; text-align: center; font-size: 14px; line-height: 14px; }
.layers .selected td { height: 20px; background: #0000b8; color: #fff; border-top: 2px solid #fff; }
.layers .selected .red { background: #f00; }
.scroll-list { margin-top: auto; height: 19px; background: var(--face); display: flex; align-items: center; justify-content: space-between; padding: 0 6px; }
.scroll-list i { flex: 1; height: 19px; background: #c1c1c1; margin: 0 14px 0 8px; }
.mark-mode { border-color: #a349a4; left: 50px; top: 8px; width: 186px; height: 52px; }

.props { margin: 4px 19px 0 11px; width: 339px; border-spacing: 0; border: 2px solid var(--dark); border-right: 1px solid #ddd; border-bottom: 1px solid #ddd; background: #fff; }
.props th, .props td { height: 25px; padding: 0 0 0 4px; text-align: left; font-weight: normal; border-bottom: 1px solid #ccc; }
.props th { background: #d4d4d4; width: 167px; border-right: 3px solid #eee; padding-left: 3px; }
.props .swatch { display: block; height: 20px; background: #f00; border: 1px solid #000; margin-right: 3px; }
.props td:has(.swatch) { padding-left: 2px; }

.lasers { display: flex; padding: 2px 0 0 13px; }
.lasers .raised { width: 51px; height: 26px; }
.lasers .raised + .raised { width: 55px; }

.rows { margin: 7px 14px 0 10px; }
.matrix { display: flex; gap: 4px; padding: 3px 6px 0 8px; }
.matrix-grid { display: grid; grid-template-columns: 16px 42px 58px 58px 58px; grid-template-rows: 17px 24px 24px; gap: 3px 4px; align-items: center; text-align: center; }
.matrix-grid b { font-weight: normal; }
.matrix-grid label { text-align: left; padding-top: 4px; }
.matrix-grid input { height: 24px; width: 100%; padding-left: 5px; color: #444; }
.clip-left { overflow: hidden; display: flex; justify-content: flex-end; white-space: nowrap; }
.mirror { width: 79px; text-align: center; }
.mirror-box { margin-top: 3px; height: 52px; border: 1px solid #222; display: grid; grid-template-columns: 1fr 1fr; align-items: center; padding-left: 3px; }
.mirror-box label { display: flex; align-items: center; gap: 6px; color: #888; }
.matrix-buttons { display: flex; align-items: flex-start; padding: 1px 6px 0 3px; }
.matrix-buttons .raised { flex: 1; height: 30px; margin: 3px 0 0 3px; }
.array { width: 37px; height: 37px; border: 2px solid #111; background: #fff; display: grid; place-items: center; }
.array svg { width: 28px; height: 28px; }

.panel-run { padding-bottom: 12px; }
.run, .device { margin: 0 5px 0 6px; }
.run { padding: 0 12px 4px 11px; }
.run legend { margin-left: -4px; }
.run-buttons { display: grid; grid-template-columns: 116px 128px 1fr; grid-auto-rows: 30px; row-gap: 1px; margin-top: 3px; }
.run-buttons .raised { height: 29px; margin-right: 1px; }
.pos { display: flex; align-items: center; margin-top: 2px; }
.pos label { width: 120px; text-align: right; padding: 12px 6px 0 0; }
.pos .select, .device .select { flex: 1; height: 25px; }
.options { display: flex; justify-content: space-between; margin-top: 12px; }
.checks { display: flex; flex-direction: column; gap: 3px; width: 240px; }
.checks label { display: flex; align-items: center; gap: 7px; height: 16px; white-space: nowrap; overflow: hidden; }
.checks label:nth-child(2) { width: 164px; }
.checks .sub { color: #888; padding-left: 21px; height: 22px; }
.borders { width: 90px; display: flex; flex-direction: column; gap: 3px; }
.borders .raised { height: 29px; }
.device { margin-top: 6px; padding-bottom: 8px; }
.device-row { display: flex; gap: 6px; align-items: center; padding: 7px 12px 0 10px; }
.device-row .raised { width: 116px; height: 29px; }

/* Colour palette and status bar */
.palette { height: 40px; flex: none; display: flex; position: relative; border-bottom: 1px solid var(--mid); padding-top: 5px; }
.palette-dock { width: 25px; padding: 2px 0 0 2px; }
.palette-dock i { display: block; width: 7px; height: 11px; margin: 2px 3px; border: solid #888; border-width: 0 1px 1px; }
.swatches { display: grid; grid-template-columns: repeat(20, 1fr); gap: 2px; width: 635px; height: 31px; }
.swatches button { border: 1px solid #888; }
.swatches .picked { border: solid; border-width: 3px 1px 1px 3px; border-color: #000 #fff #fff #000; }
.mark-color { left: 73px; top: -22px; width: 65px; height: 77px; }

.status { height: 25px; flex: none; display: flex; gap: 4px; padding-top: 5px; border-top: 1px solid #fff; font: 15px/20px var(--shell); }
.status span { border: solid #777; border-width: 1px 1px 0; flex: none; padding-left: 2px; white-space: nowrap; }
.status .message { flex: 1; min-width: 0; overflow: hidden; font: 16px/20px "Open Sans", "Noto Sans", sans-serif; }
.s1 { width: 32px; }
.s2 { width: 12px; }
.s3 { width: 7px; }
.position { width: 236px; }

/* Layer parameter dialog */
.dialog { position: absolute; left: 581px; top: 265px; width: 759px; background: var(--face); box-shadow: 0 4px 14px 2px rgba(0, 0, 0, .4); z-index: 3; }
.dialog > header { height: 33px; background: #fff; border: 1px solid #000; border-bottom: 0; display: flex; align-items: center; justify-content: space-between; padding: 0 14px 0 4px; }
.dialog h2 { font: 15px/20px var(--shell); }
.dialog header svg { width: 14px; height: 14px; }
.dialog-body { display: flex; padding: 4px 7px 8px 3px; border-left: 1px solid #555; }
.layer-list { width: 42px; display: flex; flex-direction: column; gap: 5px; flex: none; }
.layer-list .raised { height: 29px; }
.layer-list .raised svg { width: 24px; height: 14px; }
.list { flex: 1; border: solid var(--dark); border-width: 2px 0 0 2px; background: #fff; display: flex; flex-direction: column; padding: 2px 1px 0 0; }
.list i { height: 17px; background: #f00; }
.list-scroll { margin-top: auto; height: 20px; background: var(--face); display: flex; align-items: center; justify-content: space-around; }
.layer-form { width: 352px; flex: none; margin-left: 5px; padding-left: 7px; border-left: 2px solid #999; }
.library { width: 100%; height: 36px; }
.form-grid { display: grid; grid-template-columns: 133px 98px 1fr; grid-auto-rows: 25px; gap: 6px 13px; margin-top: 6px; }
.form-grid > input, .form-grid .color-box { width: 97px; padding: 0 0 2px 6px; }
.form-grid > .raised { height: 28px; width: 93px; margin-left: -8px; }
.color-box { background: #f00; border: solid; border-width: 2px 1px 1px 2px; border-color: var(--mid) #fff #fff var(--mid); }
.lbl { display: flex; align-items: center; justify-content: flex-end; text-align: right; white-space: nowrap; }
.form-grid .lbl { padding-top: 2px; }
.after { display: flex; align-items: center; gap: 7px; margin-left: -6px; }
.power { display: grid; grid-template-columns: 70px 73px 73px 1fr; grid-template-rows: 19px repeat(6, 27px); gap: 4px 13px; margin: 6px 1px 0 0; padding: 6px 0 9px; border: 1px solid #777; box-shadow: 1px 1px #fff; align-items: center; }
.power > label:not(.after) { display: flex; align-items: center; gap: 8px; padding-left: 32px; }
.power .off { color: #888; }
.power .after { margin-left: -6px; padding-top: 4px; }
.power > input { height: 27px; padding: 0 0 3px 5px; }
.head { white-space: nowrap; margin-left: -5px; }
.timing { flex: 1; min-width: 0; margin-left: 7px; padding-top: 10px; }
.seal { border: 1px solid #777; box-shadow: 1px 1px #fff; padding: 14px 9px 22px 3px; }
.seal-row { display: grid; grid-template-columns: 129px 76px 21px 83px; column-gap: 10px; align-items: center; }
.seal-row span, .delays > span { margin-left: -6px; }
.seal-row .raised { width: 83px; height: 28px; margin-left: -6px; }
.seal input:not([type]) { height: 27px; padding: 0 0 3px 5px; }
.delays { display: grid; grid-template-columns: 128px 76px 1fr; grid-template-rows: 27px 27px 24px repeat(6, 27px); gap: 5px 10px; align-items: center; border: 1px solid #777; box-shadow: 1px 1px #fff; margin-top: 8px; padding: 9px 0; }
.pierce { grid-column: 2 / 4; display: flex; align-items: center; gap: 7px; white-space: nowrap; }
.pierce span { width: 150px; overflow: hidden; }
.sync { display: flex; align-items: center; gap: 8px; height: 15px; margin-top: 12px; }
.actions { display: flex; gap: 14px; margin-top: 14px; padding-left: 116px; }
.actions .raised { width: 94px; height: 29px; }
.mark-speed { left: 77px; top: 137px; width: 245px; height: 38px; }
.mark-cut { left: 128px; top: 227px; width: 188px; height: 46px; }
.mark-power { left: 63px; top: 282px; width: 263px; height: 50px; }
```
